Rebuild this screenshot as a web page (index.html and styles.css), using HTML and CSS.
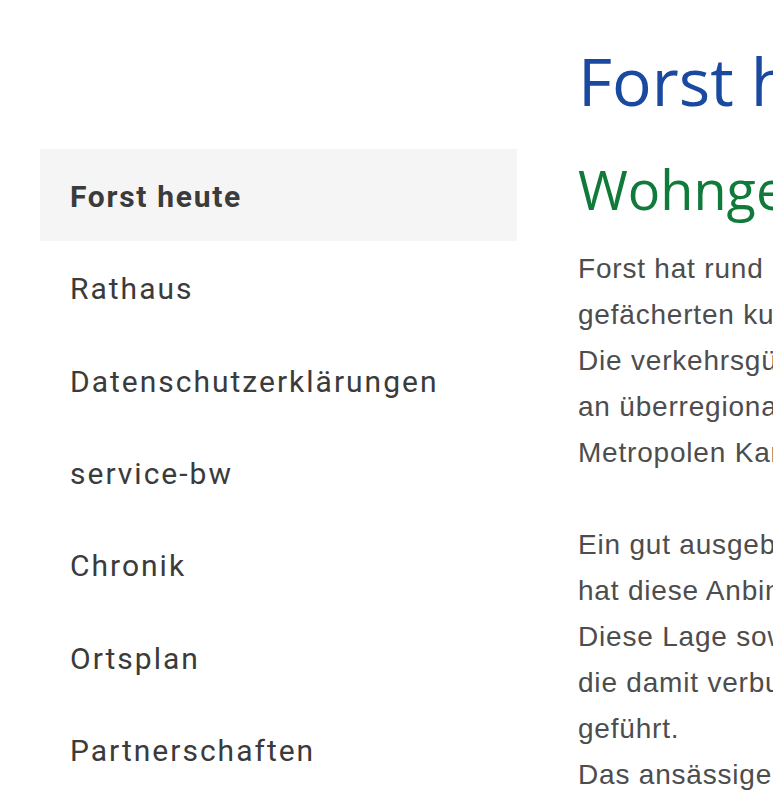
FILE: index.html
```html
<!DOCTYPE html>
<html lang="de">
<head>
<meta charset="utf-8">
<title>Forst heute</title>
<link rel="stylesheet" href="styles.css">
</head>
<body>
<div class="page">
  <nav class="sidebar">
    <ul class="nav">
      <li class="nav-item active"><a href="#">Forst heute</a></li>
      <li class="nav-item"><a href="#">Rathaus</a></li>
      <li class="nav-item"><a href="#">Datenschutzerklärungen</a></li>
      <li class="nav-item"><a href="#">service-bw</a></li>
      <li class="nav-item"><a href="#">Chronik</a></li>
      <li class="nav-item"><a href="#">Ortsplan</a></li>
      <li class="nav-item"><a href="#">Partnerschaften</a></li>
    </ul>
  </nav>
  <main class="content">
    <h1 class="title">Forst heute</h1>
    <h2 class="subtitle">Wohngemeinde mit Zukunft</h2>
    <p class="text">Forst hat rund 8.000 Einwohner und bietet neben einem breit<br>gefächerten kulturellen und sportlichen Angebot viel Lebensqualität.<br>Die verkehrsgünstige Lage mit direkter Anbindung<br>an überregionale Verkehrswege bringt die<br>Metropolen Karlsruhe, Mannheim und Heidelberg in greifbare Nähe.</p>
    <p class="text">Ein gut ausgebautes Straßennetz mit Autobahnanschluss<br>hat diese Anbindung noch weiter verbessert.<br>Diese Lage sowie die attraktiven Wohngebiete haben<br>die damit verbundene Entwicklung zu einem stetigen Wachstum<br>geführt.<br>Das ansässige Gewerbe profitiert ebenfalls davon.</p>
  </main>
</div>
</body>
</html>
```
FILE: styles.css
```css
html, body {
  margin: 0;
  padding: 0;
  background: #ffffff;
  overflow: hidden;
}
.page {
  display: flex;
  align-items: flex-start;
  gap: 61px;
  padding-left: 40px;
  width: 1400px;
}
.sidebar {
  flex: 0 0 477px;
  padding-top: 149px;
}
.nav {
  list-style: none;
  margin: 0;
  padding: 0;
}
.nav-item a {
  display: block;
  padding: 32px 30px 28px 30px;
  line-height: 32.33px;
  font-family: Roboto, "Liberation Sans", sans-serif;
  font-size: 30px;
  letter-spacing: 2px;
  color: #3b3b3b;
  text-decoration: none;
}
.nav-item.active a {
  background: #f5f5f5;
  font-weight: 700;
  letter-spacing: 1.7px;
}
.content {
  flex: 1 1 auto;
  white-space: nowrap;
}
.title {
  margin: 40px 0 0 0;
  font-family: "Open Sans", sans-serif;
  font-weight: 400;
  font-size: 66px;
  line-height: 80px;
  color: #1a4aa0;
}
.subtitle {
  margin: 36px 0 0 0;
  font-family: "Open Sans", sans-serif;
  font-weight: 400;
  font-size: 54px;
  line-height: 66px;
  color: #107a3a;
}
.text {
  margin: 24px 0 46px 0;
  font-family: "Liberation Sans", Arial, sans-serif;
  font-size: 28px;
  letter-spacing: 0.8px;
  line-height: 46px;
  color: #4d4d4d;
}
.text + .text {
  margin-top: 0;
}
```
